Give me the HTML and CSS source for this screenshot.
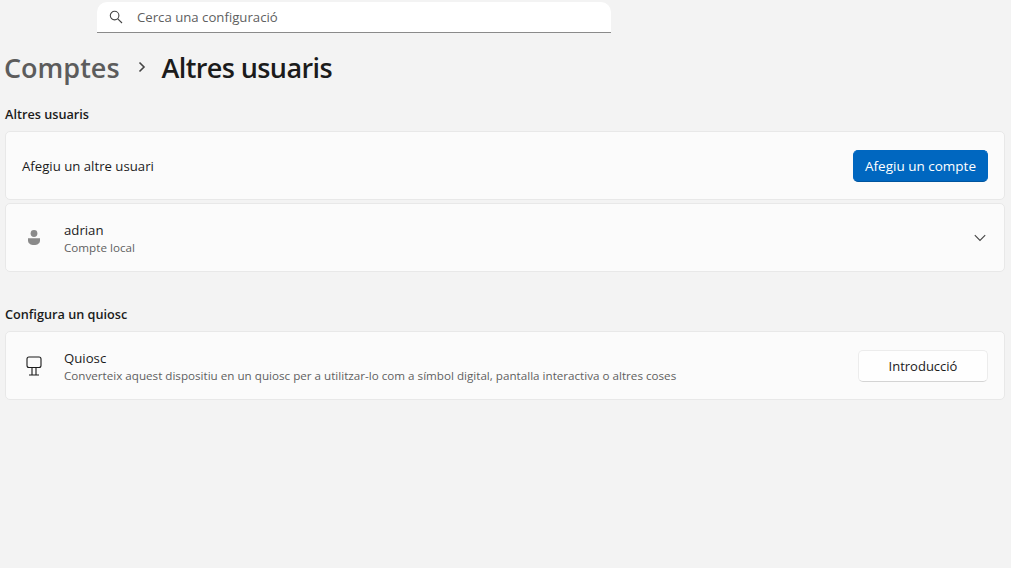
FILE: index.html
```html
<!DOCTYPE html>
<html lang="ca">
<head>
  <meta charset="UTF-8">
  <meta name="viewport" content="width=device-width, initial-scale=1.0">
  <title>Altres usuaris</title>
  <link rel="stylesheet" href="styles.css">
</head>
<body>
  <div class="search">
    <svg class="search-icon" width="14" height="14" viewBox="0 0 14 14" fill="none" stroke="#444" stroke-width="1.1">
      <circle cx="5.6" cy="5.6" r="4.3"/>
      <path d="M8.8 8.8L13 13"/>
    </svg>
    <span>Cerca una configuració</span>
  </div>

  <h1 class="title">
    <span class="crumb">Comptes</span>
    <svg class="crumb-sep" width="10" height="12" viewBox="0 0 10 12" fill="none" stroke="#444" stroke-width="1.6">
      <path d="M2.5 1.5L7 6L2.5 10.5"/>
    </svg>
    <span class="current">Altres usuaris</span>
  </h1>

  <h2 class="section">Altres usuaris</h2>
  <div class="card">
    <div class="label">Afegiu un altre usuari</div>
    <button class="btn btn-primary">Afegiu un compte</button>
  </div>
  <div class="card">
    <svg class="card-icon" width="20" height="20" viewBox="0 0 20 20" fill="#8a8a8a">
      <circle cx="10" cy="5.5" r="3.4"/>
      <path d="M4 10.2h12v2.2c0 2.8-2.6 4.6-6 4.6s-6-1.8-6-4.6z"/>
    </svg>
    <div class="text">
      <div class="label">adrian</div>
      <div class="sub">Compte local</div>
    </div>
    <svg class="chevron" width="12" height="8" viewBox="0 0 12 8" fill="none" stroke="#444" stroke-width="1.1">
      <path d="M.8 1.2L6 6.4L11.2 1.2"/>
    </svg>
  </div>

  <h2 class="section section-gap">Configura un quiosc</h2>
  <div class="card">
    <svg class="card-icon" width="20" height="20" viewBox="0 0 20 20" fill="none" stroke="#1b1b1b" stroke-width="1.1">
      <rect x="3" y="1" width="14" height="10.5" rx="2"/>
      <path d="M8 11.5V18.5M12 11.5V18.5M5 19H15"/>
    </svg>
    <div class="text">
      <div class="label">Quiosc</div>
      <div class="sub">Converteix aquest dispositiu en un quiosc per a utilitzar-lo com a símbol digital, pantalla interactiva o altres coses</div>
    </div>
    <button class="btn">Introducció</button>
  </div>
</body>
</html>
```

FILE: styles.css
```css
html, body {
  height: 100%;
}
body {
  margin: 0;
  padding: 2px 6px 0 5px;
  box-sizing: border-box;
  background: #f3f3f3;
  color: #1b1b1b;
  font-family: "Open Sans", "Noto Sans", sans-serif;
  overflow: hidden;
}
.search {
  display: flex;
  align-items: center;
  gap: 14px;
  box-sizing: border-box;
  width: 514px;
  height: 31px;
  margin-left: 92px;
  padding-left: 12px;
  background: #fff;
  border-bottom: 1px solid #8a8a8a;
  border-radius: 10px 10px 0 0;
  font-size: 13.2px;
  color: #5f5f5f;
}
.title {
  display: flex;
  align-items: center;
  height: 40px;
  margin: 14px 0 0 -1px;
  font-size: 27px;
  font-weight: 600;
}
.crumb {
  color: #5c5c5c;
}
.crumb-sep {
  margin: 0 15px 0 17px;
}
.current {
  letter-spacing: -0.6px;
}
.section {
  margin: 18px 0 7px;
  height: 19px;
  line-height: 19px;
  font-size: 12.7px;
  font-weight: 600;
}
.section-gap {
  margin-top: 33px;
}
.card {
  display: flex;
  align-items: center;
  box-sizing: border-box;
  height: 69px;
  margin-bottom: 3px;
  padding: 0 16px 0 16px;
  background: #fbfbfb;
  border: 1px solid #e8e8e8;
  border-radius: 5px;
}
.card-icon {
  flex: none;
  margin-right: 20px;
  margin-left: 2px;
}
.text {
  flex: 1;
  padding-top: 2px;
}
.card > .label {
  flex: 1;
  padding-top: 1px;
}
.label {
  font-size: 13.2px;
  line-height: 17px;
  color: #1b1b1b;
}
.sub {
  font-size: 11.65px;
  line-height: 17px;
  color: #5f5f5f;
}
.chevron {
  margin-right: 2px;
}
.btn {
  box-sizing: border-box;
  width: 130px;
  height: 32px;
  padding: 1px 0 0;
  border: 1px solid #ececec;
  border-bottom-color: #d4d4d4;
  border-radius: 5px;
  background: #fefefe;
  color: #1b1b1b;
  font-family: inherit;
  font-size: 13px;
}
.btn-primary {
  width: 135px;
  background: #0067c0;
  border-color: #0067c0;
  border-bottom-color: #00559e;
  color: #fff;
  font-size: 13.5px;
}
```
